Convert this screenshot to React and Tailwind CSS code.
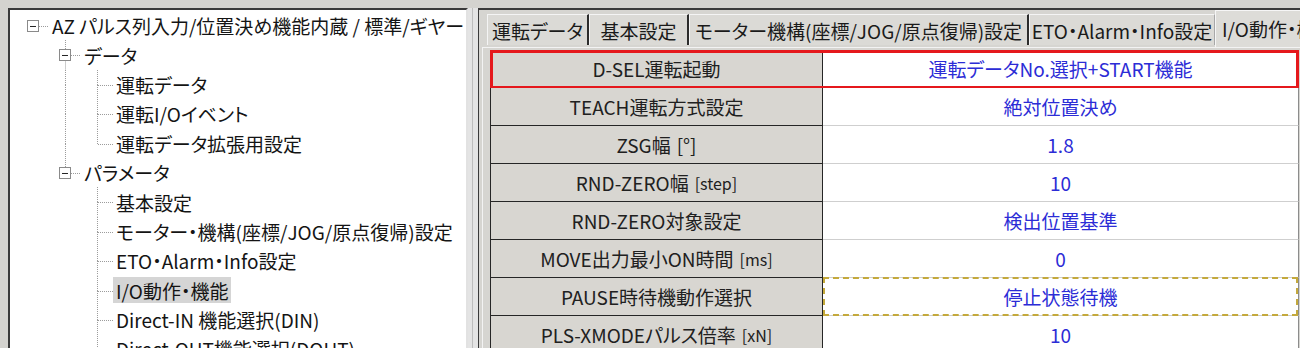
import React from "react";

const F = "font-['Noto_Sans_CJK_JP',sans-serif] [font-feature-settings:'palt']";

function Guide({ type }) {
  const c = "#9a9a9a";
  const hasBox = ["box", "boxEnd", "root"].includes(type);
  const vTop = ["pipe", "tee", "ell", "box", "boxEnd"].includes(type);
  const vBot = ["pipe", "tee", "box"].includes(type);
  const dash = ["tee", "ell", "box", "boxEnd", "root"].includes(type);
  return (
    <svg width="32" height="29.4" viewBox="0 0 32 29.4" className="block flex-none">
      {vTop && (
        <line x1="16.5" y1="0" x2="16.5" y2={hasBox ? 9.5 : 15.5} stroke={c} strokeDasharray="1 1" />
      )}
      {vBot && (
        <line x1="16.5" y1={hasBox ? 20.5 : 15} x2="16.5" y2="29.4" stroke={c} strokeDasharray="1 1" />
      )}
      {dash && (
        <line x1={hasBox ? 22 : 17} y1="15.5" x2="32" y2="15.5" stroke={c} strokeDasharray="1 1" />
      )}
      {hasBox && (
        <>
          <rect x="10.5" y="9.5" width="11" height="11" fill="white" stroke="#8a8a8a" />
          <line x1="13" y1="15.5" x2="19" y2="15.5" stroke="#222" />
        </>
      )}
    </svg>
  );
}

const tree = [
  { g: ["root"], t: "AZ パルス列入力/位置決め機能内蔵 / 標準/ギヤー" },
  { g: ["none", "box"], t: "データ" },
  { g: ["none", "pipe", "tee"], t: "運転データ" },
  { g: ["none", "pipe", "tee"], t: "運転I/Oイベント" },
  { g: ["none", "pipe", "ell"], t: "運転データ拡張用設定" },
  { g: ["none", "boxEnd"], t: "パラメータ" },
  { g: ["none", "none", "tee"], t: "基本設定" },
  { g: ["none", "none", "tee"], t: "モーター・機構(座標/JOG/原点復帰)設定" },
  { g: ["none", "none", "tee"], t: "ETO・Alarm・Info設定" },
  { g: ["none", "none", "tee"], t: "I/O動作・機能", sel: true },
  { g: ["none", "none", "tee"], t: "Direct-IN 機能選択(DIN)" },
  { g: ["none", "none", "tee"], t: "Direct-OUT機能選択(DOUT)" },
];

const rows = [
  { l: "D-SEL運転起動", v: "運転データNo.選択+START機能", red: true },
  { l: "TEACH運転方式設定", v: "絶対位置決め" },
  { l: "ZSG幅", u: "[°]", big: true, v: "1.8" },
  { l: "RND-ZERO幅", u: "[step]", v: "10" },
  { l: "RND-ZERO対象設定", v: "検出位置基準" },
  { l: "MOVE出力最小ON時間", u: "[ms]", v: "0" },
  { l: "PAUSE時待機動作選択", v: "停止状態待機", focus: true },
  { l: "PLS-XMODEパルス倍率", u: "[xN]", v: "10" },
];

const tabs = [
  { t: "運転データ", w: "w-[102px]", dark: true },
  { t: "基本設定", w: "w-[100px]", dark: true },
  { t: "モーター機構(座標/JOG/原点復帰)設定", w: "w-[340px]", dark: true },
  { t: "ETO・Alarm・Info設定", w: "w-[186px]", dark: false },
];

export default function App() {
  return (
    <div className={`w-[1300px] h-[348px] overflow-hidden bg-[#d4d3cf] pt-[8px] pl-[8px] flex ${F}`}>
      {/* Left tree panel */}
      <div className="w-[460px] h-[400px] flex-none bg-white border-t-2 border-l-2 border-r-2 border-t-[#3a3a3a] border-l-[#3a3a3a] border-r-[#e2e2e2] overflow-hidden pt-[1px] pl-[7px]">
        {tree.map((r, i) => (
          <div key={i} className="flex items-center h-[29.4px] whitespace-nowrap">
            {r.g.map((g, j) => (
              <Guide key={j} type={g} />
            ))}
            <span
              className={`h-[26px] flex items-center px-[3px] text-[19px] leading-none text-[#141414] ${
                r.sel ? "bg-[#d5d5d5]" : ""
              }`}
            >
              {r.t}
            </span>
          </div>
        ))}
      </div>

      {/* Splitter */}
      <div className="w-[10px] flex-none bg-[#e4e4e4] flex justify-center">
        <div className="w-px bg-[#bdbdbd] ml-[-2px]" />
      </div>

      {/* Right panel */}
      <div className="flex-1 bg-[#d6d5d1] border-t-2 border-l border-[#3a3a3a] pl-[3px] flex flex-col overflow-hidden">
        {/* Tabs */}
        <div className="h-[37px] flex items-end pl-[5px] whitespace-nowrap flex-none">
          {tabs.map((t, i) => (
            <div
              key={i}
              className={`${t.w} flex-none h-[31px] mb-[2px] flex items-center justify-center bg-[#dbdad6] border-t border-l border-[#f4f4f4] ${
                t.dark ? "border-r-2 border-r-[#2c2c2c]" : "border-r border-r-[#a8a8a8]"
              } text-[19px] leading-none text-[#1a1a1a]`}
            >
              {t.t}
            </div>
          ))}
          <div className="flex-none w-[120px] h-[37px] bg-[#dddcd8] border-t border-l border-[#f6f6f6] flex items-start pt-[8px] pl-[6px] text-[19px] leading-none text-[#1a1a1a]">
            I/O動作・機能
          </div>
        </div>

        {/* Tab page */}
        <div className="flex-1 border-t border-l border-[#f3f3f3] pl-[7px] pt-[2px]">
          <div className="w-[809px]">
            {rows.map((r, i) => (
              <div key={i} className="relative flex h-[38px]">
                <div className="w-[333px] flex-none flex items-center justify-center bg-[#d8d6d1] border-l border-r border-b border-[#262626] text-[19px] leading-none text-[#202020] whitespace-nowrap">
                  <span>{r.l}</span>
                  {r.u && (
                    <span className={`${r.big ? "text-[19px]" : "text-[16px]"} ml-[6px]`}>{r.u}</span>
                  )}
                </div>
                <div className="relative flex-1 flex items-center justify-center bg-white border-b border-b-[#cfcfcf] border-r border-r-[#8c8c8c] text-[19px] leading-none text-[#2c2cd6] whitespace-nowrap">
                  {r.v}
                  {r.focus && (
                    <div className="absolute left-0 right-0 top-[-1px] bottom-[-1px] border-2 border-dashed border-[#c4a93c]" />
                  )}
                </div>
                {r.red && (
                  <div className="absolute left-0 right-0 top-0 bottom-[-1px] border-[3px] border-[#e5181c]" />
                )}
              </div>
            ))}
          </div>
        </div>
      </div>
    </div>
  );
}
